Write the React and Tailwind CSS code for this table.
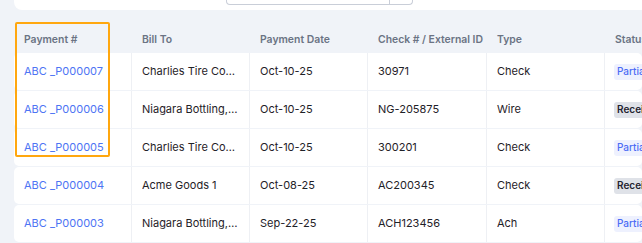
import React from 'react';

const rows = [
  { id: 'ABC _P000007', billTo: 'Charlies Tire Company', date: 'Oct-10-25', check: '30971', type: 'Check', status: 'partial' },
  { id: 'ABC _P000006', billTo: 'Niagara Bottling, LLC', date: 'Oct-10-25', check: 'NG-205875', type: 'Wire', status: 'received' },
  { id: 'ABC _P000005', billTo: 'Charlies Tire Company', date: 'Oct-10-25', check: '300201', type: 'Check', status: 'partial' },
  { id: 'ABC _P000004', billTo: 'Acme Goods 1', date: 'Oct-08-25', check: 'AC200345', type: 'Check', status: 'received' },
  { id: 'ABC _P000003', billTo: 'Niagara Bottling, LLC', date: 'Sep-22-25', check: 'ACH123456', type: 'Ach', status: 'partial' },
];

function StatusBadge({ status }) {
  if (status === 'partial') {
    return (
      <span className="inline-block rounded-[3px] bg-[#eef1fe] px-[3px] py-[1.5px] text-[10px] font-medium leading-[13px] text-[#4b6cf5] whitespace-nowrap">
        Partially Applied
      </span>
    );
  }
  return (
    <span className="inline-block rounded-[3px] bg-[#dfe2e8] px-[3px] py-[1.5px] text-[10px] font-semibold leading-[13px] text-[#1f2430] whitespace-nowrap">
      Received
    </span>
  );
}

function App() {
  return (
    <div className="relative h-[243px] w-[642px] overflow-hidden bg-[#f0f3f8] font-['Inter',sans-serif]">
      {/* filter card, scrolled mostly out of view */}
      <div className="ml-[14px] h-[10px] rounded-bl-lg bg-white">
        <div className="ml-[212px] flex h-[5px] w-[187px] rounded-b-[4px] border-x border-b border-[#c9ced8]">
          <div className="w-[162px]" />
          <div className="flex-1 border-l border-[#c9ced8]" />
        </div>
      </div>

      <div className="ml-[14px] mt-[12px]">
        <div className="flex h-[31px] items-center pt-[4px] text-[10.4px] font-semibold text-[#6b7384]">
          <div className="w-[118px] shrink-0 pl-[10px]">Payment #</div>
          <div className="w-[118px] shrink-0 pl-[10px]">Bill To</div>
          <div className="w-[118px] shrink-0 pl-[10px]">Payment Date</div>
          <div className="w-[119px] shrink-0 pl-[10px] whitespace-nowrap">Check # / External ID</div>
          <div className="w-[118px] shrink-0 pl-[10px]">Type</div>
          <div className="flex-1 pl-[10px] whitespace-nowrap">Status</div>
        </div>

        <div className="flex flex-col gap-px">
          {rows.map((r) => (
            <div key={r.id} className="flex h-[37px] items-stretch rounded-[5px] bg-white text-[11px] text-[#1f2228]">
              <div className="flex w-[118px] shrink-0 items-center border-r border-[#eef0f4] pl-[10px] text-[#4e74f4]">{r.id}</div>
              <div className="flex w-[118px] shrink-0 min-w-0 items-center border-r border-[#eef0f4] pl-[10px] pr-[10px]">
                <span className="truncate">{r.billTo}</span>
              </div>
              <div className="flex w-[118px] shrink-0 items-center border-r border-[#eef0f4] pl-[10px]">{r.date}</div>
              <div className="flex w-[119px] shrink-0 items-center border-r border-[#eef0f4] pl-[10px]">{r.check}</div>
              <div className="flex w-[118px] shrink-0 items-center border-r border-[#eef0f4] pl-[10px]">{r.type}</div>
              <div className="flex flex-1 items-center overflow-hidden pl-[9px]">
                <StatusBadge status={r.status} />
              </div>
            </div>
          ))}
        </div>
      </div>

      {/* highlight around the Payment # column */}
      <div className="pointer-events-none absolute left-[15px] top-[22px] h-[135px] w-[95px] rounded-[2px] border-2 border-[#ffa70f]" />
    </div>
  );
}

export default App;
